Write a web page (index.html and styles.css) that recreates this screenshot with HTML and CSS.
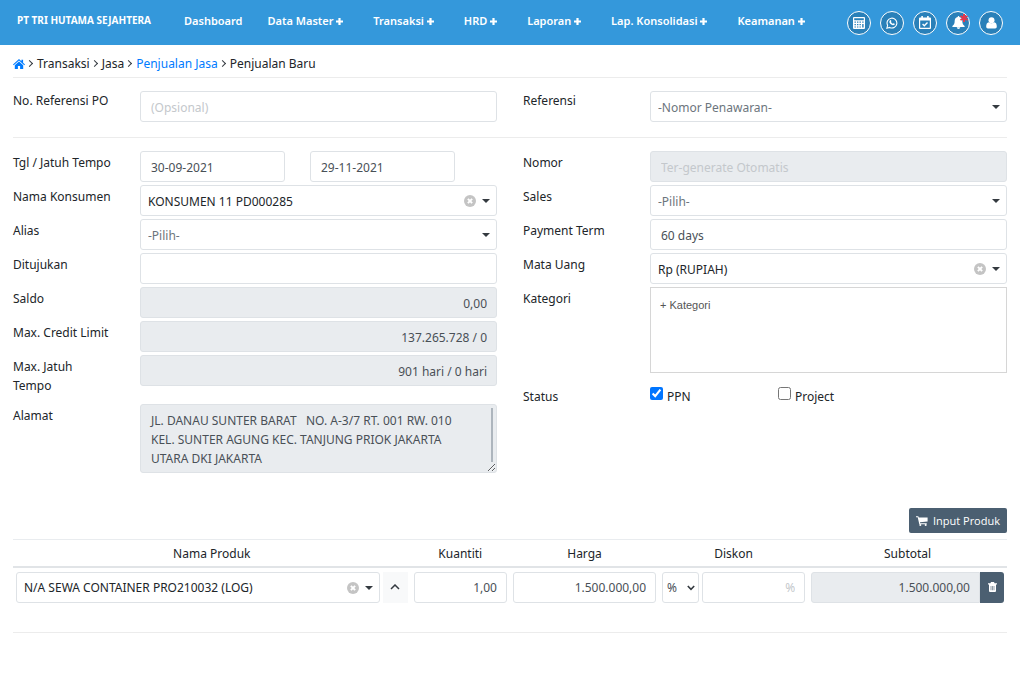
FILE: index.html
```html
<!DOCTYPE html>
<html lang="id">
<head>
	<meta charset="utf-8">
	<meta name="viewport" content="width=device-width, initial-scale=1">
	<title>Penjualan Baru</title>
	<link rel="stylesheet" href="styles.css">
</head>
<body>
	<header class="navbar">
		<a class="brand" href="#">PT TRI HUTAMA SEJAHTERA</a>
		<nav class="menu">
			<a href="#">Dashboard</a>
			<a href="#">Data Master <svg class="plus" viewBox="0 0 7 7"><path d="M2.4 0h2.2v2.4H7v2.2H4.6V7H2.4V4.6H0V2.4h2.4z"/></svg></a>
			<a href="#">Transaksi <svg class="plus" viewBox="0 0 7 7"><path d="M2.4 0h2.2v2.4H7v2.2H4.6V7H2.4V4.6H0V2.4h2.4z"/></svg></a>
			<a href="#">HRD <svg class="plus" viewBox="0 0 7 7"><path d="M2.4 0h2.2v2.4H7v2.2H4.6V7H2.4V4.6H0V2.4h2.4z"/></svg></a>
			<a href="#">Laporan <svg class="plus" viewBox="0 0 7 7"><path d="M2.4 0h2.2v2.4H7v2.2H4.6V7H2.4V4.6H0V2.4h2.4z"/></svg></a>
			<a href="#">Lap. Konsolidasi <svg class="plus" viewBox="0 0 7 7"><path d="M2.4 0h2.2v2.4H7v2.2H4.6V7H2.4V4.6H0V2.4h2.4z"/></svg></a>
			<a href="#">Keamanan <svg class="plus" viewBox="0 0 7 7"><path d="M2.4 0h2.2v2.4H7v2.2H4.6V7H2.4V4.6H0V2.4h2.4z"/></svg></a>
		</nav>
		<div class="tools">
			<button type="button" class="round" aria-label="Kalkulator">
				<svg width="12" height="12" viewBox="0 0 12 12"><path fill-rule="evenodd" d="M1 0h10a1 1 0 0 1 1 1v10a1 1 0 0 1-1 1H1a1 1 0 0 1-1-1V1a1 1 0 0 1 1-1zM1.2 1.2v2h9.6v-2zM1.5 4.600v1.200h1.400V4.600zM4 4.600v1.200h1.400V4.600zM6.500 4.600v1.200h1.400V4.600zM9.200 4.600v1.200h1.400V4.600zM1.500 7v1.200h1.400V7zM4 7v1.200h1.400V7zM6.500 7v1.200h1.400V7zM9.200 7v3.600h1.400V7zM1.500 9.400v1.200h1.400V9.400zM4 9.400v1.200h1.400V9.400zM6.500 9.400v1.200h1.400V9.400z"/></svg>
			</button>
			<button type="button" class="round" aria-label="WhatsApp">
				<svg width="12" height="12" viewBox="0 0 12 12"><path d="M1.600 8.300A4.900 4.900 0 1 1 3.700 10.400L.9 11.200z" fill="none" stroke="#fff" stroke-width="1.100"/><path d="M4.300 3.200c.5-.3.700 0 1 .9.200.5-.4.700-.3 1 .4.700 1 1.200 1.800 1.600.3.100.500-.6.900-.5.900.400 1.200.500 1.100.9-.2 1.100-1.400 1.400-2.400 1C4.600 7.400 3.600 6.100 3.400 5.200c-.1-.8.300-1.600.9-2z"/></svg>
			</button>
			<button type="button" class="round" aria-label="Agenda">
				<svg width="12" height="13" viewBox="0 0 12 13"><path fill-rule="evenodd" d="M2.300 0h1.600v1.600h4.200V0h1.600v1.600H11a1 1 0 0 1 1 1V12a1 1 0 0 1-1 1H1a1 1 0 0 1-1-1V2.600a1 1 0 0 1 1-1h1.300zM1.200 4.600v7.200h9.600V4.600z"/><path d="M3.600 8.100l1.700 1.700 3.200-3.200" fill="none" stroke="#fff" stroke-width="1.400"/></svg>
			</button>
			<button type="button" class="round" aria-label="Notifikasi">
				<svg width="13" height="13" viewBox="0 0 13 13"><path d="M6.500 0c.6 0 .8.400.8.900 2 .4 3 1.800 3 3.700 0 3 .7 4.300 2.300 5.500v.8H.4v-.8c1.600-1.200 2.300-2.500 2.300-5.500 0-1.900 1-3.300 3-3.700 0-.5.200-.9.800-.9zM4.800 11.300h3.400c0 2.200-3.400 2.200-3.400 0z"/></svg>
				<svg class="alert" width="8" height="8" viewBox="0 0 8 8"><path d="M4 0v8M.5 2l7 4M.5 6l7-4" stroke="#e8354a" stroke-width="2"/></svg>
			</button>
			<button type="button" class="round" aria-label="Akun">
				<svg width="11" height="12" viewBox="0 0 11 12"><circle cx="5.500" cy="3.200" r="3"/><path d="M2.800 5.200c1.500 1.500 3.900 1.500 5.400 0 1.800.2 2.600 2 2.600 4.300 0 1.300-.6 2-1.700 2H1.900c-1.100 0-1.700-.7-1.700-2 0-2.300.8-4.100 2.600-4.300z"/></svg>
			</button>
		</div>
	</header>

	<main class="page">
		<nav class="breadcrumb">
			<a href="#" aria-label="Beranda"><svg width="12" height="10" viewBox="0 0 12 10"><path d="M6 0l2.400 2.200V.7h1.700v3L12 5.400l-.7.800L6 1.600.7 6.200 0 5.400zM6 2.600l4.200 3.600V10H7.100V7H4.900v3H1.800V6.200z"/></svg></a>
			<span class="sep"></span><span>Transaksi</span>
			<span class="sep"></span><span>Jasa</span>
			<span class="sep"></span><a href="#">Penjualan Jasa</a>
			<span class="sep"></span><span>Penjualan Baru</span>
		</nav>

		<form>
			<div class="columns reference">
				<div class="field">
					<label for="po">No. Referensi PO</label>
					<input class="control" id="po" type="text" placeholder="(Opsional)">
				</div>
				<div class="field">
					<label for="ref">Referensi</label>
					<div class="picker"><select class="control empty" id="ref"><option>-Nomor Penawaran-</option></select></div>
				</div>
			</div>

			<div class="columns">
				<div class="fields">
					<div class="field">
						<label for="tgl">Tgl / Jatuh Tempo</label>
						<div class="dates">
							<input class="control" id="tgl" type="text" value="30-09-2021">
							<input class="control" type="text" value="29-11-2021" aria-label="Jatuh Tempo">
						</div>
					</div>
					<div class="field">
						<label for="konsumen">Nama Konsumen</label>
						<div class="picker">
							<select class="control" id="konsumen"><option>KONSUMEN 11 PD000285</option></select>
							<button type="button" class="clear" aria-label="Hapus"></button>
						</div>
					</div>
					<div class="field">
						<label for="alias">Alias</label>
						<div class="picker"><select class="control empty" id="alias"><option>-Pilih-</option></select></div>
					</div>
					<div class="field">
						<label for="ditujukan">Ditujukan</label>
						<input class="control" id="ditujukan" type="text">
					</div>
					<div class="field">
						<label for="saldo">Saldo</label>
						<input class="control number" id="saldo" type="text" value="0,00" readonly>
					</div>
					<div class="field">
						<label for="limit">Max. Credit Limit</label>
						<input class="control number" id="limit" type="text" value="137.265.728 / 0" readonly>
					</div>
					<div class="field">
						<label for="tempo">Max. Jatuh<br>Tempo</label>
						<input class="control number" id="tempo" type="text" value="901 hari / 0 hari" readonly>
					</div>
					<div class="field">
						<label for="alamat">Alamat</label>
						<div class="address">
							<textarea class="control" id="alamat" readonly>JL. DANAU SUNTER BARAT   NO. A-3/7 RT. 001 RW. 010
KEL. SUNTER AGUNG KEC. TANJUNG PRIOK JAKARTA
UTARA DKI JAKARTA</textarea>
						</div>
					</div>
				</div>

				<div class="fields">
					<div class="field">
						<label for="nomor">Nomor</label>
						<input class="control" id="nomor" type="text" placeholder="Ter-generate Otomatis" readonly>
					</div>
					<div class="field">
						<label for="sales">Sales</label>
						<div class="picker"><select class="control empty" id="sales"><option>-Pilih-</option></select></div>
					</div>
					<div class="field">
						<label for="term">Payment Term</label>
						<input class="control" id="term" type="text" value="60 days">
					</div>
					<div class="field">
						<label for="uang">Mata Uang</label>
						<div class="picker">
							<select class="control" id="uang"><option>Rp (RUPIAH)</option></select>
							<button type="button" class="clear" aria-label="Hapus"></button>
						</div>
					</div>
					<div class="field">
						<label for="kategori">Kategori</label>
						<textarea class="tags" id="kategori" placeholder="+ Kategori"></textarea>
					</div>
					<div class="field status">
						<span class="caption">Status</span>
						<div class="checks">
							<label><input type="checkbox" checked>PPN</label>
							<label><input type="checkbox">Project</label>
						</div>
					</div>
				</div>
			</div>

			<div class="actions">
				<button type="button" class="dark add">
					<svg width="12" height="10" viewBox="0 0 12 10"><path d="M0 .3h2.300l.5 1.200H11.600v4L4 6.300l.2.900h6.500v1H3.300L1.700 1.300H0z"/><circle cx="4.300" cy="9" r="1"/><circle cx="9.700" cy="9" r="1"/></svg>
					Input Produk
				</button>
			</div>

			<table class="products">
				<thead>
					<tr>
						<th class="name">Nama Produk</th>
						<th class="qty">Kuantiti</th>
						<th class="price">Harga</th>
						<th class="discount">Diskon</th>
						<th class="total">Subtotal</th>
					</tr>
				</thead>
				<tbody>
					<tr>
						<td>
							<div class="cell">
								<div class="picker">
									<select class="control" aria-label="Nama Produk"><option>N/A SEWA CONTAINER PRO210032 (LOG)</option></select>
									<button type="button" class="clear" aria-label="Hapus"></button>
								</div>
								<button type="button" class="fold" aria-label="Tutup"><svg width="10" height="6" viewBox="0 0 10 6"><path d="M1 5l4-4 4 4" fill="none" stroke="#343a40" stroke-width="1.500"/></svg></button>
							</div>
						</td>
						<td><input class="control number" type="text" value="1,00" aria-label="Kuantiti"></td>
						<td><input class="control number" type="text" value="1.500.000,00" aria-label="Harga"></td>
						<td>
							<div class="cell">
								<div class="unit">
									<select class="control" aria-label="Satuan diskon"><option>%</option></select>
									<svg width="8" height="6" viewBox="0 0 8 6"><path d="M.8 1L4 4.300 7.200 1" fill="none" stroke="#343a40" stroke-width="1.600"/></svg>
								</div>
								<input class="control number" type="text" placeholder="%" aria-label="Diskon">
							</div>
						</td>
						<td>
							<div class="cell joined">
								<input class="control number" type="text" value="1.500.000,00" aria-label="Subtotal" readonly>
								<button type="button" class="dark remove" aria-label="Hapus produk"><svg width="9" height="10" viewBox="0 0 9 10"><path fill-rule="evenodd" d="M3 0h3l.6 1.300H9v1.200H8V9a1 1 0 0 1-1 1H2a1 1 0 0 1-1-1V2.500H0V1.300h2.400zM2.700 4v4.300h.6V4zM4.200 4v4.300h.6V4zM5.700 4v4.300h.6V4z"/></svg></button>
							</div>
						</td>
					</tr>
				</tbody>
			</table>
		</form>
	</main>
</body>
</html>
```

FILE: styles.css
```css
* { box-sizing: border-box; }

body {
	margin: 0;
	background: #fff;
	color: #212529;
	font: 12px/19px "Noto Sans", sans-serif;
}

a { color: #007bff; text-decoration: none; }
svg { display: block; fill: currentColor; }
button, input, select, textarea { margin: 0; font: inherit; }
button { border: 0; padding: 0; cursor: pointer; }

/* top bar */
.navbar {
	display: flex;
	align-items: center;
	min-height: 45px;
	padding: 0 17px;
	background: #3498db;
	color: #fff;
}
.navbar a { color: #fff; white-space: nowrap; }
.brand { margin-right: 33px; padding-bottom: 5px; font-size: 10px; font-weight: 700; }
.menu { display: flex; gap: 30px; padding-bottom: 4px; font-size: 11px; font-weight: 600; }
.menu a:first-child { margin-right: -5px; }
.plus { display: inline-block; width: 7px; height: 7px; }
.tools { display: flex; gap: 9px; margin-left: auto; }
.round {
	position: relative;
	display: flex;
	align-items: center;
	justify-content: center;
	width: 24px;
	height: 24px;
	border: 1px solid #fff;
	border-radius: 50%;
	background: #2980b9;
	color: #fff;
}
.alert { position: absolute; top: 2px; right: 1px; }

/* breadcrumb */
.page { padding: 0 13px; }
.breadcrumb {
	display: flex;
	align-items: center;
	gap: 4px;
	padding: 9px 0 4px;
	border-bottom: 1px solid #ececec;
}
.sep {
	width: 5px;
	height: 5px;
	margin: 0 1px 0 -2px;
	border: solid #343a40;
	border-width: 1px 1px 0 0;
	transform: rotate(45deg);
}

/* form */
.columns {
	display: grid;
	grid-template-columns: 1fr 1fr;
	gap: 26px;
	align-items: start;
	padding-top: 13px;
}
.reference { padding-bottom: 15px; border-bottom: 1px solid #ececec; }
.fields { display: grid; gap: 3px; }
.field {
	display: grid;
	grid-template-columns: 127px 1fr;
	align-items: start;
}
.field > label, .caption { padding: 2px 0 6px; }
.reference .field > label { padding-top: 0; }
.control {
	display: block;
	width: 100%;
	height: 31px;
	padding: 1px 10px 0;
	border: 1px solid #dee2e6;
	border-radius: 3px;
	outline: 0;
	background: #fff;
	color: #495057;
}
.control::placeholder { color: #c4c8cc; }
.control:read-only:not(select) { background: #e9ecef; }
.number { padding-right: 9px; text-align: right; }
.dates { display: grid; grid-template-columns: 145px 145px; gap: 25px; }

select.control {
	appearance: none;
	padding: 1px 7px 0;
	color: #212529;
}
select.empty { color: #6c757d; }
.picker { position: relative; }
.picker::after {
	content: "";
	position: absolute;
	top: 14px;
	right: 7px;
	border: solid transparent;
	border-width: 4px 4px 0;
	border-top-color: #343a40;
}
.clear {
	position: absolute;
	top: 10px;
	right: 21px;
	width: 12px;
	height: 12px;
	border-radius: 50%;
	background: #c4c4c4;
}
.clear::before, .clear::after {
	content: "";
	position: absolute;
	top: 5px;
	left: 3px;
	width: 6px;
	height: 2px;
	background: #fff;
	transform: rotate(45deg);
}
.clear::after { transform: rotate(-45deg); }

.address { position: relative; }
.address textarea {
	height: 69px;
	padding: 6px 10px;
	overflow: hidden;
	white-space: pre;
}
.address::after {
	content: "";
	position: absolute;
	top: 4px;
	right: 4px;
	width: 2px;
	height: 54px;
	background: #adb5bd;
}
.tags {
	display: block;
	width: 100%;
	height: 86px;
	padding: 8px 9px;
	border: 1px solid #d6d6d6;
	outline: 0;
	resize: none;
	font: 11px/19px "Liberation Sans", sans-serif;
}
.tags::placeholder { color: #555; }
.status { padding-top: 9px; }
.checks { display: grid; grid-template-columns: 128px 1fr; padding-top: 2px; }
.checks label { display: flex; gap: 4px; }
.checks input { width: 13px; height: 13px; accent-color: #0075ff; }

/* product table */
.actions { display: flex; justify-content: flex-end; padding: 35px 0 6px; }
.dark { background: #4b5f71; color: #fff; }
.add {
	display: flex;
	align-items: center;
	gap: 5px;
	height: 25px;
	padding: 0 7px;
	border-radius: 2px;
	font-family: "Open Sans", sans-serif;
	font-size: 11px;
}
.products {
	width: 100%;
	border-collapse: collapse;
	table-layout: fixed;
	border-top: 1px solid #e9ecef;
	border-bottom: 1px solid #ececec;
}
.products th {
	height: 27px;
	padding: 2px 0 0;
	border-bottom: 2px solid #e1e4e7;
	font-weight: 400;
}
.products td { padding: 4px 3px 29px; }
.name { width: 40%; }
.qty { width: 10%; }
.price { width: 15%; }
.discount { width: 15%; }
.total { width: 20%; }
.cell { display: flex; gap: 3px; }
.cell .picker { flex: 1; }
.fold {
	display: flex;
	align-items: center;
	justify-content: center;
	width: 25px;
	background: #f8f9fa;
}
.unit { position: relative; flex: none; width: 37px; }
.unit select.control { padding: 1px 4px 0; color: #495057; }
.unit svg { position: absolute; top: 13px; right: 4px; }
.joined { gap: 0; }
.joined .control { border-radius: 3px 0 0 3px; }
.remove {
	display: flex;
	flex: none;
	align-items: center;
	justify-content: center;
	width: 24px;
	border-radius: 0 3px 3px 0;
}
```
